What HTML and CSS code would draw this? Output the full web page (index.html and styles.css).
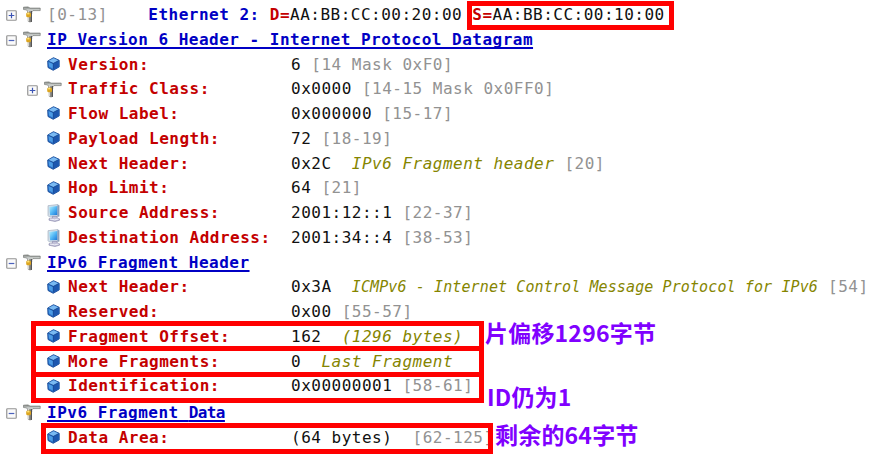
FILE: index.html
```html
<!DOCTYPE html>
<html lang="zh-CN">
<head>
<meta charset="utf-8">
<title>Packet Decode</title>
<link rel="stylesheet" href="styles.css">
</head>
<body>
<svg class="defs" width="0" height="0" aria-hidden="true">
  <defs>
    <linearGradient id="metal" x1="0" y1="0" x2="0" y2="1"><stop offset="0" stop-color="#777b78"/><stop offset=".45" stop-color="#d4d8d6"/><stop offset="1" stop-color="#686b68"/></linearGradient>
    <linearGradient id="screen" x1="0" y1="0" x2="1" y2="1"><stop offset="0" stop-color="#b4f0ff"/><stop offset=".5" stop-color="#55b9f5"/><stop offset="1" stop-color="#1976d8"/></linearGradient>
    <symbol id="plus" viewBox="0 0 11 11"><rect x=".75" y=".75" width="9.5" height="9.5" rx=".7" fill="#fafafa" stroke="#949494" stroke-width="1.2"/><path d="M2.7 5.5h5.6M5.5 2.7v5.6" stroke="#3d55b5" stroke-width="1.2"/></symbol>
    <symbol id="minus" viewBox="0 0 11 11"><rect x=".75" y=".75" width="9.5" height="9.5" rx=".7" fill="#fafafa" stroke="#949494" stroke-width="1.2"/><path d="M2.7 5.5h5.6" stroke="#4b62bd" stroke-width="1.2"/></symbol>
    <symbol id="tee" viewBox="0 0 18 17"><path d="M.5 1.2 5 .9l2 1.2h10.2v2.5H10L8.7 6v2H4.8V5L3 3.8.5 3.5z" fill="url(#metal)" stroke="#777a77" stroke-width=".7"/><path d="M4.8 5.5h4v10l-1.8.9-2.2-1.2z" fill="#858582"/><path d="M5.6 5v10" stroke="#deded8" stroke-width="1"/><path d="M8.4 5v11" stroke="#454545" stroke-width=".9"/><rect x="3.2" y="6.4" width="4.8" height="4.8" rx="1.5" fill="#dca51f"/><path d="M4.2 7.7h2.2" stroke="#ffe477" stroke-width="1.4"/></symbol>
    <symbol id="cube" viewBox="0 0 13 14"><path d="M.7 4 6.5.7l5.7 2.6v6.6l-6 3.4L1 10.5z" fill="#286fc9" stroke="#194b96" stroke-width=".9"/><path d="M1.2 4 6.6 1.3l5 2.1-5.2 2.8z" fill="#79b9f2"/><path d="m6.6 6.5 5-2.7v5.6l-5 3.1z" fill="#1d57af"/><path d="m1.6 5 4.4 1.9v4.8l-4-2.1z" fill="#4b9be5"/><path d="m1.3 4.2 5 2.2 5.3-2.8M6.3 6.4v6" fill="none" stroke="#123f86" stroke-width=".7"/></symbol>
    <symbol id="computer" viewBox="0 0 14 18"><path d="m1 1.7 10-1.2 1.2 1.2v10.7L2.4 13 1 11.5z" fill="#d4dfe9" stroke="#98a7bb" stroke-width=".6"/><path d="m2.3 2.9 8-.9v8.9l-7.2.4z" fill="url(#screen)"/><path d="M11.1 1.2v11" stroke="#607ba4" stroke-width="1"/><path d="M5.5 12.3h4.3l.5 1.7 2.2.8v1.4L8 17.5l-6-1.3v-1.5l3.5-.8z" fill="#c1c1d8" stroke="#8583a7" stroke-width=".6"/><path d="m3 15 4.7.8 3.8-.8" stroke="#eeeef8" fill="none"/></symbol>
  </defs>
</svg>
<main class="decode">
  <div class="row"><svg class="toggle"><use href="#plus"/></svg><svg class="tee"><use href="#tee"/></svg><span class="line"><i class="range">[0-13]</i>    <b class="proto">Ethernet 2:</b> <b>D=</b>AA:BB:CC:00:20:00 <b>S=</b>AA:BB:CC:00:10:00</span></div>
  <div class="row"><svg class="toggle"><use href="#minus"/></svg><svg class="tee"><use href="#tee"/></svg><a class="heading">IP Version 6 Header - Internet Protocol Datagram</a></div>
  <div class="row field"><svg class="cube"><use href="#cube"/></svg><b class="label">Version:</b><span class="line">6 <i class="range">[14 Mask 0xF0]</i></span></div>
  <div class="row nested"><svg class="toggle"><use href="#plus"/></svg><svg class="tee"><use href="#tee"/></svg><b class="label">Traffic Class:</b><span class="line">0x0000 <i class="range">[14-15 Mask 0x0FF0]</i></span></div>
  <div class="row field"><svg class="cube"><use href="#cube"/></svg><b class="label">Flow Label:</b><span class="line">0x000000 <i class="range">[15-17]</i></span></div>
  <div class="row field"><svg class="cube"><use href="#cube"/></svg><b class="label">Payload Length:</b><span class="line">72 <i class="range">[18-19]</i></span></div>
  <div class="row field"><svg class="cube"><use href="#cube"/></svg><b class="label">Next Header:</b><span class="line">0x2C  <em>IPv6 Fragment header</em> <i class="range">[20]</i></span></div>
  <div class="row field"><svg class="cube"><use href="#cube"/></svg><b class="label">Hop Limit:</b><span class="line">64 <i class="range">[21]</i></span></div>
  <div class="row field"><svg class="computer"><use href="#computer"/></svg><b class="label">Source Address:</b><span class="line">2001:12::1 <i class="range">[22-37]</i></span></div>
  <div class="row field"><svg class="computer"><use href="#computer"/></svg><b class="label">Destination Address:</b><span class="line">2001:34::4 <i class="range">[38-53]</i></span></div>
  <div class="row"><svg class="toggle"><use href="#minus"/></svg><svg class="tee"><use href="#tee"/></svg><a class="heading">IPv6 Fragment Header</a></div>
  <div class="row field"><svg class="cube"><use href="#cube"/></svg><b class="label">Next Header:</b><span class="line">0x3A  <em class="condensed">ICMPv6 - Internet Control Message Protocol for IPv6</em> <i class="range">[54]</i></span></div>
  <div class="row field"><svg class="cube"><use href="#cube"/></svg><b class="label">Reserved:</b><span class="line">0x00 <i class="range">[55-57]</i></span></div>
  <div class="row field"><svg class="cube"><use href="#cube"/></svg><b class="label">Fragment Offset:</b><span class="line">162  <em>(1296 bytes)</em></span></div>
  <div class="row field"><svg class="cube"><use href="#cube"/></svg><b class="label">More Fragments:</b><span class="line">0  <em>Last Fragment</em></span></div>
  <div class="row field"><svg class="cube"><use href="#cube"/></svg><b class="label">Identification:</b><span class="line">0x00000001 <i class="range">[58-61]</i></span></div>
  <div class="row data-heading"><svg class="toggle"><use href="#minus"/></svg><svg class="tee"><use href="#tee"/></svg><a class="heading">IPv6 Fragment <span class="tight">Data</span></a></div>
  <div class="row field"><svg class="cube"><use href="#cube"/></svg><b class="label">Data Area:</b><span class="line">(64 bytes)  <i class="range">[62-125]</i></span></div>

  <div class="box box-source"></div>
  <div class="box box-offset"></div>
  <div class="box box-more"></div>
  <div class="box box-id"></div>
  <div class="box box-data"></div>
  <div class="note note-offset">片偏移1296字节</div>
  <div class="note note-id">ID仍为1</div>
  <div class="note note-data">剩余的64字节</div>
</main>
</body>
</html>
```
FILE: styles.css
```css
* { box-sizing: border-box; }
body { margin: 0; background: #fff; overflow: hidden; }
.defs { position: absolute; }
.decode {
  position: relative;
  width: 888px;
  height: 459px;
  padding-top: 3px;
  overflow: hidden;
  color: #111;
  font: 16px/24.75px "DejaVu Sans Mono", "Liberation Mono", monospace;
  letter-spacing: .493px;
}
.row { display: flex; align-items: center; height: 24.75px; padding-left: 6px; white-space: pre; }
.row svg { flex: none; }
.field { padding-left: 47px; }
.nested { padding-left: 27px; }
.data-heading { margin-top: 2px; }
.toggle { width: 11px; height: 11px; margin: 1px 6px 0 0; }
.tee { width: 18px; height: 17px; margin: -1px 6px 0 0; }
.cube { width: 13px; height: 14px; margin: -2px 8px 0 0; }
.computer { width: 14px; height: 18px; margin-right: 7px; }
.label { flex: 0 0 223px; }
b { color: #c40000; }
.proto, .heading { color: #0000c4; font-weight: bold; }
.heading { text-decoration: underline 2px; text-underline-offset: 2px; text-decoration-skip-ink: none; }
.tight { letter-spacing: -.6px; }
.range { color: #929292; font-style: normal; }
em { color: #858500; font-style: italic; }
.condensed { font-size: 15px; letter-spacing: .11px; }
.box { position: absolute; border: 5px solid #f00; }
.box-source { left: 467px; top: 1px; width: 207px; height: 29px; }
.box-offset { left: 31px; top: 321px; width: 453px; height: 30px; }
.box-more { left: 31px; top: 346px; width: 453px; height: 31px; }
.box-id { left: 31px; top: 372px; width: 453px; height: 31px; }
.box-data { left: 41px; top: 423px; width: 452px; height: 31px; }
.note {
  position: absolute;
  color: #8000ff;
  font: bold 23px/30px "Noto Sans CJK SC", sans-serif;
  letter-spacing: .2px;
  white-space: nowrap;
}
.note-offset { left: 485px; top: 317px; }
.note-id { left: 487px; top: 381px; }
.note-data { left: 495px; top: 419px; }
```
